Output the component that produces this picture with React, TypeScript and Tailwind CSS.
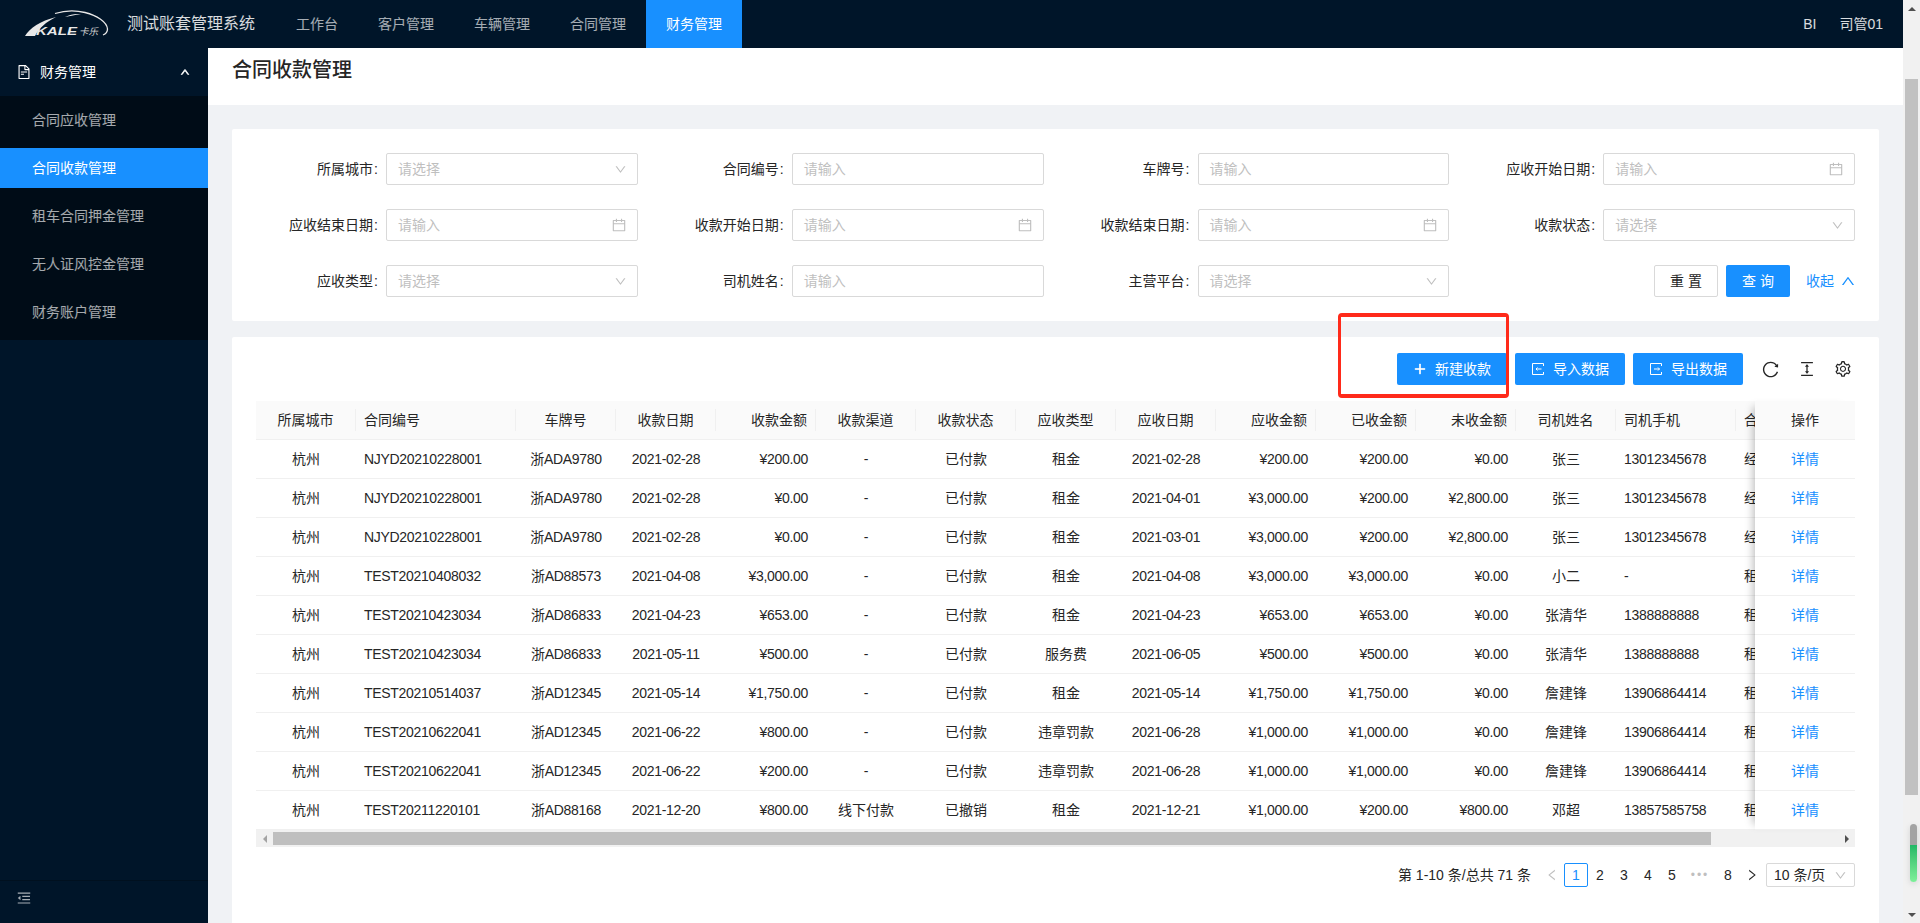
import { AiOutlineCalendar, AiOutlineDown, AiOutlineFileText, AiOutlineLeft, AiOutlineMenuFold, AiOutlinePlus, AiOutlineReload, AiOutlineRight, AiOutlineSetting, AiOutlineUp, AiOutlineColumnHeight } from 'react-icons/ai';

const fontStack = `font-['Liberation_Sans','Noto_Sans_CJK_SC',sans-serif]`;

const navTabs = ['工作台', '客户管理', '车辆管理', '合同管理', '财务管理'];
const menuItems = ['合同应收管理', '合同收款管理', '租车合同押金管理', '无人证风控金管理', '财务账户管理'];

const filters = [
  { label: '所属城市', type: 'select' },
  { label: '合同编号', type: 'input' },
  { label: '车牌号', type: 'input' },
  { label: '应收开始日期', type: 'date' },
  { label: '应收结束日期', type: 'date' },
  { label: '收款开始日期', type: 'date' },
  { label: '收款结束日期', type: 'date' },
  { label: '收款状态', type: 'select' },
  { label: '应收类型', type: 'select' },
  { label: '司机姓名', type: 'input' },
  { label: '主营平台', type: 'select' },
];

// title, width, alignment, tight latin digits
const columns = [
  { title: '所属城市', w: 'w-[100px]', align: 'center', tight: false },
  { title: '合同编号', w: 'w-[160px]', align: 'left', tight: true },
  { title: '车牌号', w: 'w-[100px]', align: 'center', tight: true },
  { title: '收款日期', w: 'w-[100px]', align: 'center', tight: true },
  { title: '收款金额', w: 'w-[100px]', align: 'right', tight: true },
  { title: '收款渠道', w: 'w-[100px]', align: 'center', tight: false },
  { title: '收款状态', w: 'w-[100px]', align: 'center', tight: false },
  { title: '应收类型', w: 'w-[100px]', align: 'center', tight: false },
  { title: '应收日期', w: 'w-[100px]', align: 'center', tight: true },
  { title: '应收金额', w: 'w-[100px]', align: 'right', tight: true },
  { title: '已收金额', w: 'w-[100px]', align: 'right', tight: true },
  { title: '未收金额', w: 'w-[100px]', align: 'right', tight: true },
  { title: '司机姓名', w: 'w-[100px]', align: 'center', tight: false },
  { title: '司机手机', w: 'w-[120px]', align: 'left', tight: true },
  { title: '合', w: 'w-[100px]', align: 'left', tight: false },
];

const rows = [
  ['杭州', 'NJYD20210228001', '浙ADA9780', '2021-02-28', '¥200.00', '-', '已付款', '租金', '2021-02-28', '¥200.00', '¥200.00', '¥0.00', '张三', '13012345678', '经'],
  ['杭州', 'NJYD20210228001', '浙ADA9780', '2021-02-28', '¥0.00', '-', '已付款', '租金', '2021-04-01', '¥3,000.00', '¥200.00', '¥2,800.00', '张三', '13012345678', '经'],
  ['杭州', 'NJYD20210228001', '浙ADA9780', '2021-02-28', '¥0.00', '-', '已付款', '租金', '2021-03-01', '¥3,000.00', '¥200.00', '¥2,800.00', '张三', '13012345678', '经'],
  ['杭州', 'TEST20210408032', '浙AD88573', '2021-04-08', '¥3,000.00', '-', '已付款', '租金', '2021-04-08', '¥3,000.00', '¥3,000.00', '¥0.00', '小二', '-', '租'],
  ['杭州', 'TEST20210423034', '浙AD86833', '2021-04-23', '¥653.00', '-', '已付款', '租金', '2021-04-23', '¥653.00', '¥653.00', '¥0.00', '张清华', '1388888888', '租'],
  ['杭州', 'TEST20210423034', '浙AD86833', '2021-05-11', '¥500.00', '-', '已付款', '服务费', '2021-06-05', '¥500.00', '¥500.00', '¥0.00', '张清华', '1388888888', '租'],
  ['杭州', 'TEST20210514037', '浙AD12345', '2021-05-14', '¥1,750.00', '-', '已付款', '租金', '2021-05-14', '¥1,750.00', '¥1,750.00', '¥0.00', '詹建锋', '13906864414', '租'],
  ['杭州', 'TEST20210622041', '浙AD12345', '2021-06-22', '¥800.00', '-', '已付款', '违章罚款', '2021-06-28', '¥1,000.00', '¥1,000.00', '¥0.00', '詹建锋', '13906864414', '租'],
  ['杭州', 'TEST20210622041', '浙AD12345', '2021-06-22', '¥200.00', '-', '已付款', '违章罚款', '2021-06-28', '¥1,000.00', '¥1,000.00', '¥0.00', '詹建锋', '13906864414', '租'],
  ['杭州', 'TEST20211220101', '浙AD88168', '2021-12-20', '¥800.00', '线下付款', '已撤销', '租金', '2021-12-21', '¥1,000.00', '¥200.00', '¥800.00', '邓超', '13857585758', '租'],
];

const alignText = (align: string) => (align === 'left' ? 'text-left' : align === 'right' ? 'text-right' : 'text-center');
const alignFlex = (align: string) => (align === 'left' ? 'justify-start' : align === 'right' ? 'justify-end' : 'justify-center');

const Logo = () => (
  <svg width="110" height="40" viewBox="0 0 110 40" className="shrink-0">
    <path d="M10 32 C15 24 25 17 41 13 C31 18 24 24 20 32 Z" fill="#e8e8e8" />
    <path d="M40 9.5 C48 7 60 6 70 8.5 C82 11.5 92 18 92.5 25 C92.5 28 90.5 30 88 31" fill="none" stroke="#e8e8e8" strokeWidth="1.3" />
    <path d="M50 13 C55 10.5 60 9.5 66 10 C60 11 55 12 50 13 Z" fill="#ffffff" />
    <text x="21" y="31" fontSize="11.5" fontWeight="700" fontStyle="italic" textLength="41" lengthAdjust="spacingAndGlyphs" fill="#e8e8e8" fontFamily="Liberation Sans">KALE</text>
    <text x="64" y="31" fontSize="9.5" fontStyle="italic" fill="#d8d8d8" fontFamily="Noto Sans CJK SC">卡乐</text>
  </svg>
);

const ImportIcon = ({ out }: { out?: boolean }) => (
  <svg width="14" height="14" viewBox="0 0 14 14" fill="none" stroke="#fff" strokeWidth="1" className="shrink-0">
    <path d="M12.5 4V1.5H1.5V12.5H12.5V10" />
    {out ? <path d="M5 7H10.5M9 5.5L10.5 7L9 8.5" /> : <path d="M10.5 7H5M6.5 5.5L5 7L6.5 8.5" />}
  </svg>
);

const FilterField = ({ label, type }: { label: string; type: string }) => (
  <div className="flex items-center h-8">
    <label className="w-[130px] shrink-0 pr-2 text-right text-[14px] text-[#262626]">
      {label}
      <span className="ml-[1px]">:</span>
    </label>
    <div className="flex-1 h-8 flex items-center justify-between pl-[11px] pr-[10px] bg-white border border-[#d9d9d9] rounded-[2px]">
      <span className="text-[14px] text-[#bfbfbf]">{type === 'select' ? '请选择' : '请输入'}</span>
      {type === 'select' && <AiOutlineDown size={13} color="#bfbfbf" />}
      {type === 'date' && <AiOutlineCalendar size={16} color="#bfbfbf" />}
    </div>
  </div>
);

export default function App() {
  return (
    <div className={`relative flex w-[1920px] h-[923px] overflow-hidden bg-[#f0f2f5] ${fontStack}`}>
      <div className="flex flex-col w-[1903px] h-full">
        {/* top nav */}
        <header className="flex items-center h-12 shrink-0 pl-[15px] bg-[#001529] text-[14px]">
          <Logo />
          <div className="ml-[2px] w-[129px] text-[16px] text-white/85 whitespace-nowrap">测试账套管理系统</div>
          <nav className="flex h-full ml-5">
            {navTabs.map((tab, i) => (
              <div
                key={tab}
                className={`flex items-center h-full px-5 ${i === 4 ? 'bg-[#1890ff] text-white' : 'text-white/65'}`}
              >
                {tab}
              </div>
            ))}
          </nav>
          <div className="ml-auto flex items-center pr-[20px] text-white/85">
            <span className="mr-[23px]">BI</span>
            <span>司管01</span>
          </div>
        </header>

        <div className="flex flex-1 min-h-0">
          {/* sidebar */}
          <aside className="flex flex-col w-[208px] shrink-0 bg-[#001529] text-[14px]">
            <div className="flex items-center h-12 pl-4 pr-[18px] text-white">
              <AiOutlineFileText size={16} />
              <span className="ml-2">财务管理</span>
              <AiOutlineUp size={10} stroke="currentColor" strokeWidth={90} className="ml-auto" />
            </div>
            <ul className="flex flex-col gap-2 py-1 pb-2 bg-[#000c17]">
              {menuItems.map((item, i) => (
                <li
                  key={item}
                  className={`flex items-center h-10 pl-8 ${i === 1 ? 'bg-[#1890ff] text-white' : 'text-white/65'}`}
                >
                  {item}
                </li>
              ))}
            </ul>
            <div className="mt-auto flex items-start h-[43px] pt-[9px] pl-4 border-t border-[#00101f] text-white/65">
              <AiOutlineMenuFold size={16} />
            </div>
          </aside>

          {/* content */}
          <main className="flex-1 min-w-0 overflow-hidden">
            <div className="h-[57px] pt-2 pl-6 bg-white">
              <h1 className="text-[20px] leading-7 font-medium text-[#262626]">合同收款管理</h1>
            </div>
            <div className="px-6 pt-6">
              {/* filter card */}
              <section className="p-6 bg-white rounded-[2px]">
                <div className="grid grid-cols-4 gap-x-6 gap-y-6">
                  {filters.map(f => (
                    <FilterField key={f.label} label={f.label} type={f.type} />
                  ))}
                  <div className="flex items-center justify-end h-8 text-[14px]">
                    <button className="w-16 h-8 mr-[8px] bg-white border border-[#d9d9d9] rounded-[2px] text-[#262626]">重 置</button>
                    <button className="w-16 h-8 bg-[#1890ff] rounded-[2px] text-white">查 询</button>
                    <span className="flex items-center ml-4 mr-[-1px] text-[#1890ff]">
                      收起
                      <AiOutlineUp size={16} className="ml-[6px]" />
                    </span>
                  </div>
                </div>
              </section>

              {/* table card */}
              <section className="relative mt-4 px-6 pt-4 pb-10 bg-white rounded-[2px] text-[14px] text-[#262626]">
                <div className="flex items-center justify-end h-8 pr-[3px]">
                  <button className="flex items-center justify-center w-[110px] h-8 bg-[#1890ff] rounded-[2px] text-white">
                    <AiOutlinePlus size={14} stroke="currentColor" strokeWidth={50} />
                    <span className="ml-2">新建收款</span>
                  </button>
                  <button className="flex items-center justify-center w-[110px] h-8 ml-2 bg-[#1890ff] rounded-[2px] text-white">
                    <ImportIcon />
                    <span className="ml-2">导入数据</span>
                  </button>
                  <button className="flex items-center justify-center w-[110px] h-8 ml-2 bg-[#1890ff] rounded-[2px] text-white">
                    <ImportIcon out />
                    <span className="ml-2">导出数据</span>
                  </button>
                  <div className="flex items-center gap-[18px] ml-[18px] text-[#262626]">
                    <AiOutlineReload size={19} />
                    <AiOutlineColumnHeight size={18} />
                    <AiOutlineSetting size={18} />
                  </div>
                </div>

                {/* red annotation frame from the original capture */}
                <div className="absolute left-[1106px] top-[-24px] w-[171px] h-[85px] border-x-[3px] border-y-4 border-[#ff2a1a] rounded-[4px] pointer-events-none" />

                <div className="mt-4">
                  <div className="flex">
                    <div className="w-[1499px] overflow-hidden">
                      <table className="table-fixed w-[1580px] border-separate border-spacing-0">
                        <thead>
                          <tr>
                            {columns.map(col => (
                              <th key={col.title} className={`${col.w} h-[39px] p-0 bg-[#fafafa] border-b border-[#f0f0f0] font-normal`}>
                                <div className={`flex items-center h-[22px] px-2 border-r border-[#f0f0f0] whitespace-nowrap ${alignFlex(col.align)}`}>
                                  {col.title}
                                </div>
                              </th>
                            ))}
                          </tr>
                        </thead>
                        <tbody>
                          {rows.map((row, r) => (
                            <tr key={r}>
                              {row.map((cell, c) => (
                                <td
                                  key={c}
                                  className={`h-[39px] px-2 border-b border-[#f0f0f0] whitespace-nowrap overflow-hidden ${alignText(columns[c].align)} ${columns[c].tight ? 'tracking-[-0.3px]' : ''}`}
                                >
                                  {cell}
                                </td>
                              ))}
                            </tr>
                          ))}
                        </tbody>
                      </table>
                    </div>
                    {/* fixed action column */}
                    <div className="relative w-[100px] shrink-0 bg-white shadow-[-8px_0_8px_-6px_rgba(0,0,0,0.25)]">
                      <div className="flex items-center justify-center h-[39px] bg-[#fafafa] border-b border-[#f0f0f0]">操作</div>
                      {rows.map((_, r) => (
                        <div key={r} className="flex items-center justify-center h-[39px] border-b border-[#f0f0f0] text-[#1890ff]">详情</div>
                      ))}
                    </div>
                  </div>
                  {/* table horizontal scrollbar */}
                  <div className="flex items-center h-[17px] bg-[#f1f1f1]">
                    <div className="flex items-center justify-center w-[17px] shrink-0">
                      <div className="w-0 h-0 border-y-[4px] border-y-transparent border-r-[4px] border-r-[#a3a3a3]" />
                    </div>
                    <div className="w-[1438px] h-[13px] bg-[#bfbfbf]" />
                    <div className="flex items-center justify-center w-[17px] ml-auto">
                      <div className="w-0 h-0 border-y-[4px] border-y-transparent border-l-[4px] border-l-[#505050]" />
                    </div>
                  </div>
                </div>

                {/* pagination */}
                <div className="flex items-center justify-end h-6 mt-4">
                  <span className="mr-[9px]">第 1-10 条/总共 71 条</span>
                  <span className="flex items-center justify-center w-6 h-6 text-[#bfbfbf]"><AiOutlineLeft size={14} /></span>
                  <span className="flex items-center justify-center w-6 h-6 border border-[#1890ff] rounded-[2px] text-[#1890ff]">1</span>
                  {['2', '3', '4', '5'].map(p => (
                    <span key={p} className="flex items-center justify-center w-6 h-6">{p}</span>
                  ))}
                  <span className="flex items-center justify-center w-8 h-6 text-[12px] tracking-[2px] text-[#bfbfbf]">•••</span>
                  <span className="flex items-center justify-center w-6 h-6">8</span>
                  <span className="flex items-center justify-center w-6 h-6"><AiOutlineRight size={14} /></span>
                  <span className="flex items-center justify-between w-[89px] h-6 ml-[2px] pl-[7px] pr-[7px] border border-[#d9d9d9] rounded-[2px]">
                    10 条/页
                    <AiOutlineDown size={13} color="#bfbfbf" />
                  </span>
                </div>
              </section>
            </div>
          </main>
        </div>
      </div>

      {/* page scrollbar */}
      <div className="flex flex-col items-center w-[17px] h-full shrink-0 bg-[#f1f1f1]">
        <div className="flex items-center justify-center h-[17px] shrink-0">
          <div className="w-0 h-0 border-x-[4px] border-x-transparent border-b-[4px] border-b-[#505050]" />
        </div>
        <div className="w-[13px] h-[716px] mt-[62px] bg-[#c1c1c1]" />
        <div className="flex items-center justify-center h-[17px] mt-auto shrink-0">
          <div className="w-0 h-0 border-x-[4px] border-x-transparent border-t-[4px] border-t-[#505050]" />
        </div>
      </div>

      {/* green level widget sitting over the scrollbar */}
      <div className="absolute left-[1910px] top-[824px] flex flex-col w-[7px] h-[58px] overflow-hidden rounded-full shadow-[0_2px_6px_rgba(0,0,0,0.12)]">
        <div className="h-[21px] bg-[#a3a3a3]" />
        <div className="flex-1 bg-gradient-to-b from-[#1fb866] to-[#7df09a]" />
      </div>
    </div>
  );
}
